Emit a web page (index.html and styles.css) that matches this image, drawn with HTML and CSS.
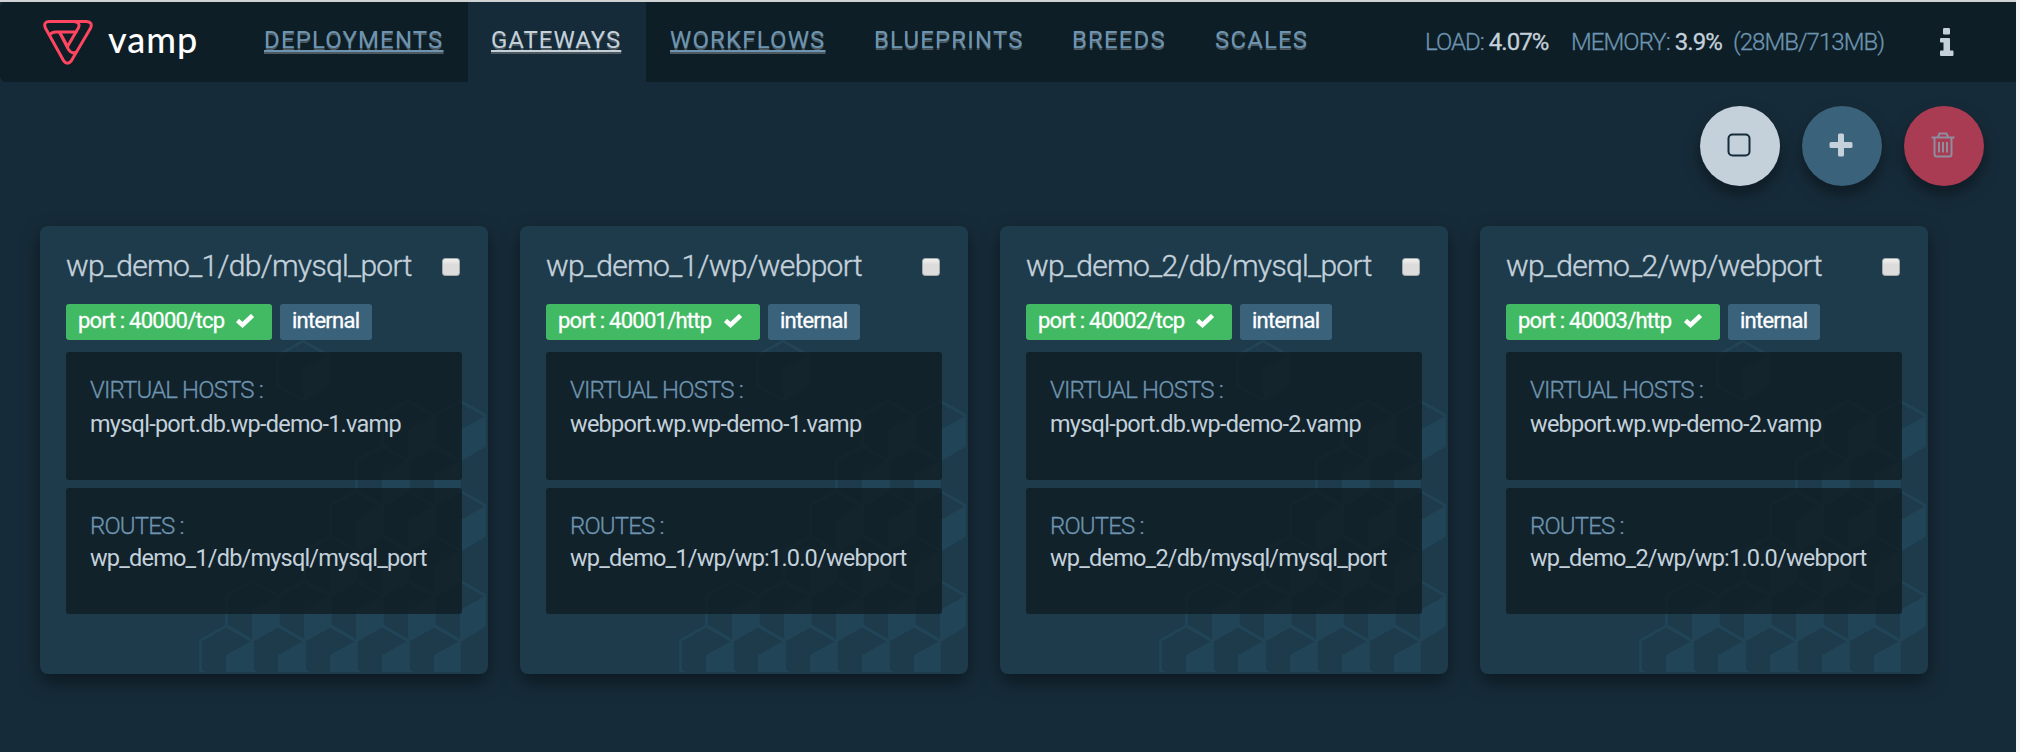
FILE: index.html
```html
<!DOCTYPE html>
<html lang="en">
<head>
<meta charset="utf-8">
<title>Vamp</title>
<link rel="stylesheet" href="styles.css">
</head>
<body>
<div class="app">
  <header class="topbar">
    <a class="brand">
      <svg class="brand-mark" width="50" height="46" viewBox="0 0 50 46" fill="none" stroke="#ff4560" stroke-width="3" stroke-linejoin="round" stroke-linecap="round">
        <path d="M6 2.500H43.500Q50 3 47.600 9L28.200 42Q24.500 46.500 20.800 42L2.400 9Q0 3 6 2.500Z"/>
        <path d="M31 2.500Q37.500 3 35.600 8.500L24.500 27.500L17 14"/>
        <path d="M7 15.500Q9 13 13 13H33"/>
        <path d="M17 14L25.500 30.500Q28.500 35 32.500 33.500"/>
      </svg>
      <span class="brand-name">vamp</span>
    </a>
    <nav class="nav">
      <a class="nav-item linked deployments">DEPLOYMENTS</a>
      <a class="nav-item linked active">GATEWAYS</a>
      <a class="nav-item linked workflows">WORKFLOWS</a>
      <a class="nav-item blueprints">BLUEPRINTS</a>
      <a class="nav-item breeds">BREEDS</a>
      <a class="nav-item scales">SCALES</a>
    </nav>
    <div class="stats">
      <span class="stat load">LOAD: <b>4.07%</b></span>
      <span class="stat memory">MEMORY: <b>3.9%</b></span>
      <span class="stat detail">(28MB/713MB)</span>
    </div>
    <svg class="info" width="14" height="28" viewBox="0 0 14 28" fill="#c4d1db"><rect x="3" y="0" width="7" height="6.500" rx="1.200"/><path d="M1 10H9Q10 10 10 11V22.500H12.500Q13.500 22.500 13.500 23.500V27Q13.500 28 12.500 28H1Q0 28 0 27V23.500Q0 22.500 1 22.500H3.500V14.500H1Q0 14.500 0 13.500V11Q0 10 1 10Z"/></svg>
  </header>
  <div class="actions">
    <button class="round select"><svg width="24" height="24" viewBox="0 0 24 24" fill="none" stroke="#162b39" stroke-width="2"><rect x="1.500" y="1.500" width="21" height="21" rx="4"/></svg></button>
    <button class="round add"><svg width="24" height="24" viewBox="0 0 24 24" fill="#c4d1db"><path d="M10.500 0.500H13.500Q15 0.500 15 2V9H22Q23.500 9 23.500 10.500V13.500Q23.500 15 22 15H15V22Q15 23.500 13.500 23.500H10.500Q9 23.500 9 22V15H2Q0.500 15 0.500 13.500V10.500Q0.500 9 2 9H9V2Q9 0.500 10.500 0.500Z"/></svg></button>
    <button class="round remove"><svg width="24" height="26" viewBox="0 0 24 26" fill="none" stroke="#8e8e9f" stroke-width="2"><path d="M0.500 5.500H23.500M7 5L8.500 1.500H15.500L17 5M3.500 5.500V22Q3.500 24.500 5.500 24.500H18.500Q20.500 24.500 20.500 22V5.500M8 10V20.500M12 10V20.500M16 10V20.500"/></svg></button>
  </div>
  <main class="cards" id="cards"></main>
</div>
<svg class="defs" width="0" height="0">
  <defs>
    <g id="cube"><path d="M0 1L25.500 15.500V45.500L0 60.500L-25.500 45.500V15.500Z" fill="#1d3b4b" stroke="#224457" stroke-width="2.800"/><path d="M0 30L26 15.500V45.500L0 60.500Z" fill="#224457"/></g>
  </defs>
</svg>
<script src="app.js"></script>
</body>
</html>
```
FILE: styles.css
```css
* { box-sizing: border-box; }
body { margin: 0; background: #f3f4f5; font-family: Roboto, "Liberation Sans", sans-serif; }
.app { width: 2016px; height: 752px; border-top: 2px solid #cfd3d4; background: #162b39; overflow: hidden; }
.topbar { display: flex; align-items: stretch; height: 80px; background: #0e1e26; border-radius: 6px 0 0 6px; }
.brand { display: flex; width: 240px; padding: 17px 0 0 43px; }
.brand-mark { flex: none; }
.brand-name { margin: -5px 0 0 15px; font: 500 36px/50px Lato, sans-serif; letter-spacing: 1px; color: #fff; }
.nav { display: flex; flex: none; width: 1160px; }
.nav-item { flex: none; padding: 21px 0 0 24px; font-size: 24px; line-height: 34px; letter-spacing: 1.150px; color: #6d95b1; text-shadow: 0 2px 0 #4d5960; white-space: nowrap; }
.linked { text-decoration: underline; text-decoration-thickness: 2px; text-underline-offset: 2px; }
.deployments { width: 228px; }
.active { width: 178px; padding-left: 23px; letter-spacing: 1px; background: #162b39; color: #c4d1db; }
.workflows { width: 204px; }
.blueprints { width: 198px; }
.breeds { width: 143px; }
.scales { width: 140px; }
.stats { display: flex; flex: none; width: 540px; padding-left: 25px; font-size: 24px; font-weight: 300; line-height: 80px; letter-spacing: -.950px; color: #6d95b1; white-space: nowrap; -webkit-text-stroke: .3px; }
.stats b { font-weight: 400; color: #c4d1db; }
.load { width: 146px; }
.memory { width: 162px; }
.info { margin-top: 26px; }
.actions { display: flex; justify-content: flex-end; gap: 22px; padding: 24px 32px 0 0; }
.round { display: flex; align-items: center; justify-content: center; width: 80px; height: 80px; padding: 0 3px 3px 0; border: 0; border-radius: 50%; box-shadow: 0 8px 16px rgba(0, 0, 0, .4); }
.select { background: #c4d1db; }
.add { background: #3a627b; }
.remove { background: #a93b53; }
.cards { display: flex; gap: 32px; padding: 40px 0 0 40px; }
.card { position: relative; flex: none; width: 448px; height: 448px; padding: 0 26px; border-radius: 8px; background: #1d3b4b; box-shadow: 0 8px 20px rgba(0, 0, 0, .45); }
.cubes { position: absolute; left: 0; top: 0; }
.card-body { position: relative; }
.card-head { display: flex; justify-content: space-between; align-items: flex-start; height: 78px; padding: 22px 2px 0 0; }
.card-title { margin: 0; font-size: 30px; font-weight: 300; line-height: 36px; letter-spacing: -.670px; color: #c4d1db; white-space: nowrap; -webkit-text-stroke: .4px; }
.check { width: 18px; height: 18px; margin-top: 10px; border: 1px solid #a8a8a8; border-radius: 3px; background: linear-gradient(#f2f2f2, #dcdcdc 35%); }
.tags { display: flex; gap: 8px; height: 36px; }
.tag { display: flex; align-items: center; height: 36px; padding: 0 12px 3px; border-radius: 3px; font-size: 22px; letter-spacing: -.750px; color: #fff; white-space: nowrap; -webkit-text-stroke: .3px; }
.tag span { flex: none; }
.port { justify-content: space-between; width: 206px; padding-right: 18px; background: #42b963; }
.port-http { width: 214px; }
.internal { width: 92px; background: #3a627b; }
.panel { padding: 22px 24px 0; border-radius: 3px; background: rgba(17, 31, 38, .85); white-space: nowrap; }
.hosts { height: 128px; margin-top: 12px; }
.routes { height: 126px; margin-top: 8px; }
.label { font-size: 24px; font-weight: 300; line-height: 33px; letter-spacing: -.850px; color: #6d95b1; -webkit-text-stroke: .3px; }
.value { font-size: 23.500px; line-height: 34px; letter-spacing: -.750px; color: #c4d1db; }
.routes .value { line-height: 30px; letter-spacing: -.800px; }
.defs { position: absolute; }
```
FILE: app.js
```js
const gateways = [
  ["wp_demo_1/db/mysql_port", "40000/tcp", "mysql-port.db.wp-demo-1.vamp", "wp_demo_1/db/mysql/mysql_port"],
  ["wp_demo_1/wp/webport", "40001/http", "webport.wp.wp-demo-1.vamp", "wp_demo_1/wp/wp:1.0.0/webport"],
  ["wp_demo_2/db/mysql_port", "40002/tcp", "mysql-port.db.wp-demo-2.vamp", "wp_demo_2/db/mysql/mysql_port"],
  ["wp_demo_2/wp/webport", "40003/http", "webport.wp.wp-demo-2.vamp", "wp_demo_2/wp/wp:1.0.0/webport"]
];

// Cubes of each background row: [top, rightmost centre, count]
const rows = [
  [114, 263, 1], [174, 420, 2], [219, 394, 2], [264, 420, 3],
  [309, 394, 3], [354, 420, 5], [399, 394, 5]
];

const cubes = rows.map(([top, right, count]) => {
  let row = "";
  for (let i = count - 1; i >= 0; i--) {
    row += `<use href="#cube" x="${right - i * 52}" y="${top}"/>`;
  }
  return row;
}).join("");

document.getElementById("cards").innerHTML = gateways.map(([name, port, host, route]) => `
  <section class="card">
    <svg class="cubes" width="446" height="446">${cubes}</svg>
    <div class="card-body">
      <div class="card-head"><h2 class="card-title">${name}</h2><span class="check"></span></div>
      <div class="tags">
        <div class="tag port${port.endsWith("http") ? " port-http" : ""}"><span>port : ${port}</span>
          <svg width="18" height="14" viewBox="0 0 18 14" fill="none" stroke="#fff" stroke-width="4.500"><path d="M1.500 6.500L6.500 11L16.500 1.500"/></svg></div>
        <div class="tag internal"><span>internal</span></div>
      </div>
      <div class="panel hosts"><div class="label">VIRTUAL HOSTS :</div><div class="value">${host}</div></div>
      <div class="panel routes"><div class="label">ROUTES :</div><div class="value">${route}</div></div>
    </div>
  </section>`).join("");
```
